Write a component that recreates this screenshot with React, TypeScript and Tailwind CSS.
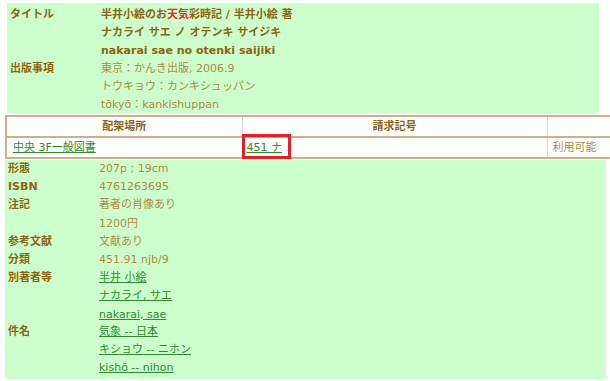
import { ReactNode } from 'react';

const font = "font-['DejaVu_Sans','Noto_Sans_CJK_JP',sans-serif]";

function Field({ label, children, className = '' }: { label?: string; children: ReactNode; className?: string }) {
    return (
        <div className={`flex ${className}`}>
            <div className="w-[91px] shrink-0 font-bold text-[#8f6410]">{label}</div>
            <div className="flex-1 text-[#b08a3e]">{children}</div>
        </div>
    );
}

function Link({ children }: { children: ReactNode }) {
    return <div><a href="#" className="text-[#2f8a2f] underline">{children}</a></div>;
}

export default function App() {
    return (
        <div className={`w-[610px] h-[381px] overflow-hidden bg-white text-[11px] leading-[18px] ${font}`}>
            {/* Title / publication */}
            <div className="ml-[7px] mt-[3px] w-[592px] h-[110px] bg-[#ccffcc] pl-[3px] pt-[3px]">
                <Field label="タイトル">
                    <div className="font-bold text-[#8f6410]">
                        <div>半井小絵のお<span className="text-[#ff1a1a]">天気</span>彩時記 / 半井小絵 著</div>
                        <div>ナカライ サエ ノ オテンキ サイジキ</div>
                        <div>nakarai sae no otenki saijiki</div>
                    </div>
                </Field>
                <Field label="出版事項">
                    <div>東京：かんき出版, 2006.9</div>
                    <div>トウキョウ：カンキシュッパン</div>
                    <div>tōkyō：kankishuppan</div>
                </Field>
            </div>

            {/* Holdings table */}
            <table className="ml-[5px] mt-[2px] w-[640px] border-collapse bg-white">
                <thead>
                    <tr className="h-[21px]">
                        <th className="w-[236px] border-2 border-r border-[#cdb08a] border-r-[#d8d8d8] font-bold text-[#8f6410]">配架場所</th>
                        <th className="w-[305px] border-2 border-x border-[#cdb08a] border-x-[#d8d8d8] font-bold text-[#8f6410]">請求記号</th>
                        <th className="border-2 border-l border-[#cdb08a] border-l-[#d8d8d8]"></th>
                    </tr>
                </thead>
                <tbody>
                    <tr className="h-[21px]">
                        <td className="border-2 border-r border-t border-[#cdb08a] border-r-[#d8d8d8] border-t-[#d8d8d8] pl-[6px] font-normal">
                            <a href="#" className="text-[#2f8a2f] underline">中央 3F一般図書</a>
                        </td>
                        <td className="relative border-2 border-x border-t border-[#cdb08a] border-x-[#d8d8d8] border-t-[#d8d8d8] pl-[4px]">
                            <a href="#" className="text-[#2f8a2f] underline">451 ナ</a>
                            <div className="absolute -left-[1px] -top-[4px] w-[49px] h-[25px] border-[3px] border-[#e3202a]"></div>
                        </td>
                        <td className="border-2 border-l border-t border-[#cdb08a] border-l-[#d8d8d8] border-t-[#d8d8d8] pl-[5px] text-[#b08a3e]">利用可能</td>
                    </tr>
                </tbody>
            </table>

            {/* Details */}
            <div className="ml-[5px] mt-[1px] w-[601px] h-[219px] bg-[#ccffcc] pl-[3px] leading-[18.2px]">
                <Field label="形態">207p ; 19cm</Field>
                <Field label="ISBN">4761263695</Field>
                <Field label="注記">
                    <div>著者の肖像あり</div>
                    <div>1200円</div>
                </Field>
                <Field label="参考文献">文献あり</Field>
                <Field label="分類">451.91 njb/9</Field>
                <Field label="別著者等">
                    <Link>半井 小絵</Link>
                    <Link>ナカライ, サエ</Link>
                    <Link>nakarai, sae</Link>
                </Field>
                <Field label="件名" className="-mt-[1px]">
                    <Link>気象 -- 日本</Link>
                    <Link>キショウ -- ニホン</Link>
                    <Link>kishō -- nihon</Link>
                </Field>
            </div>
        </div>
    );
}
